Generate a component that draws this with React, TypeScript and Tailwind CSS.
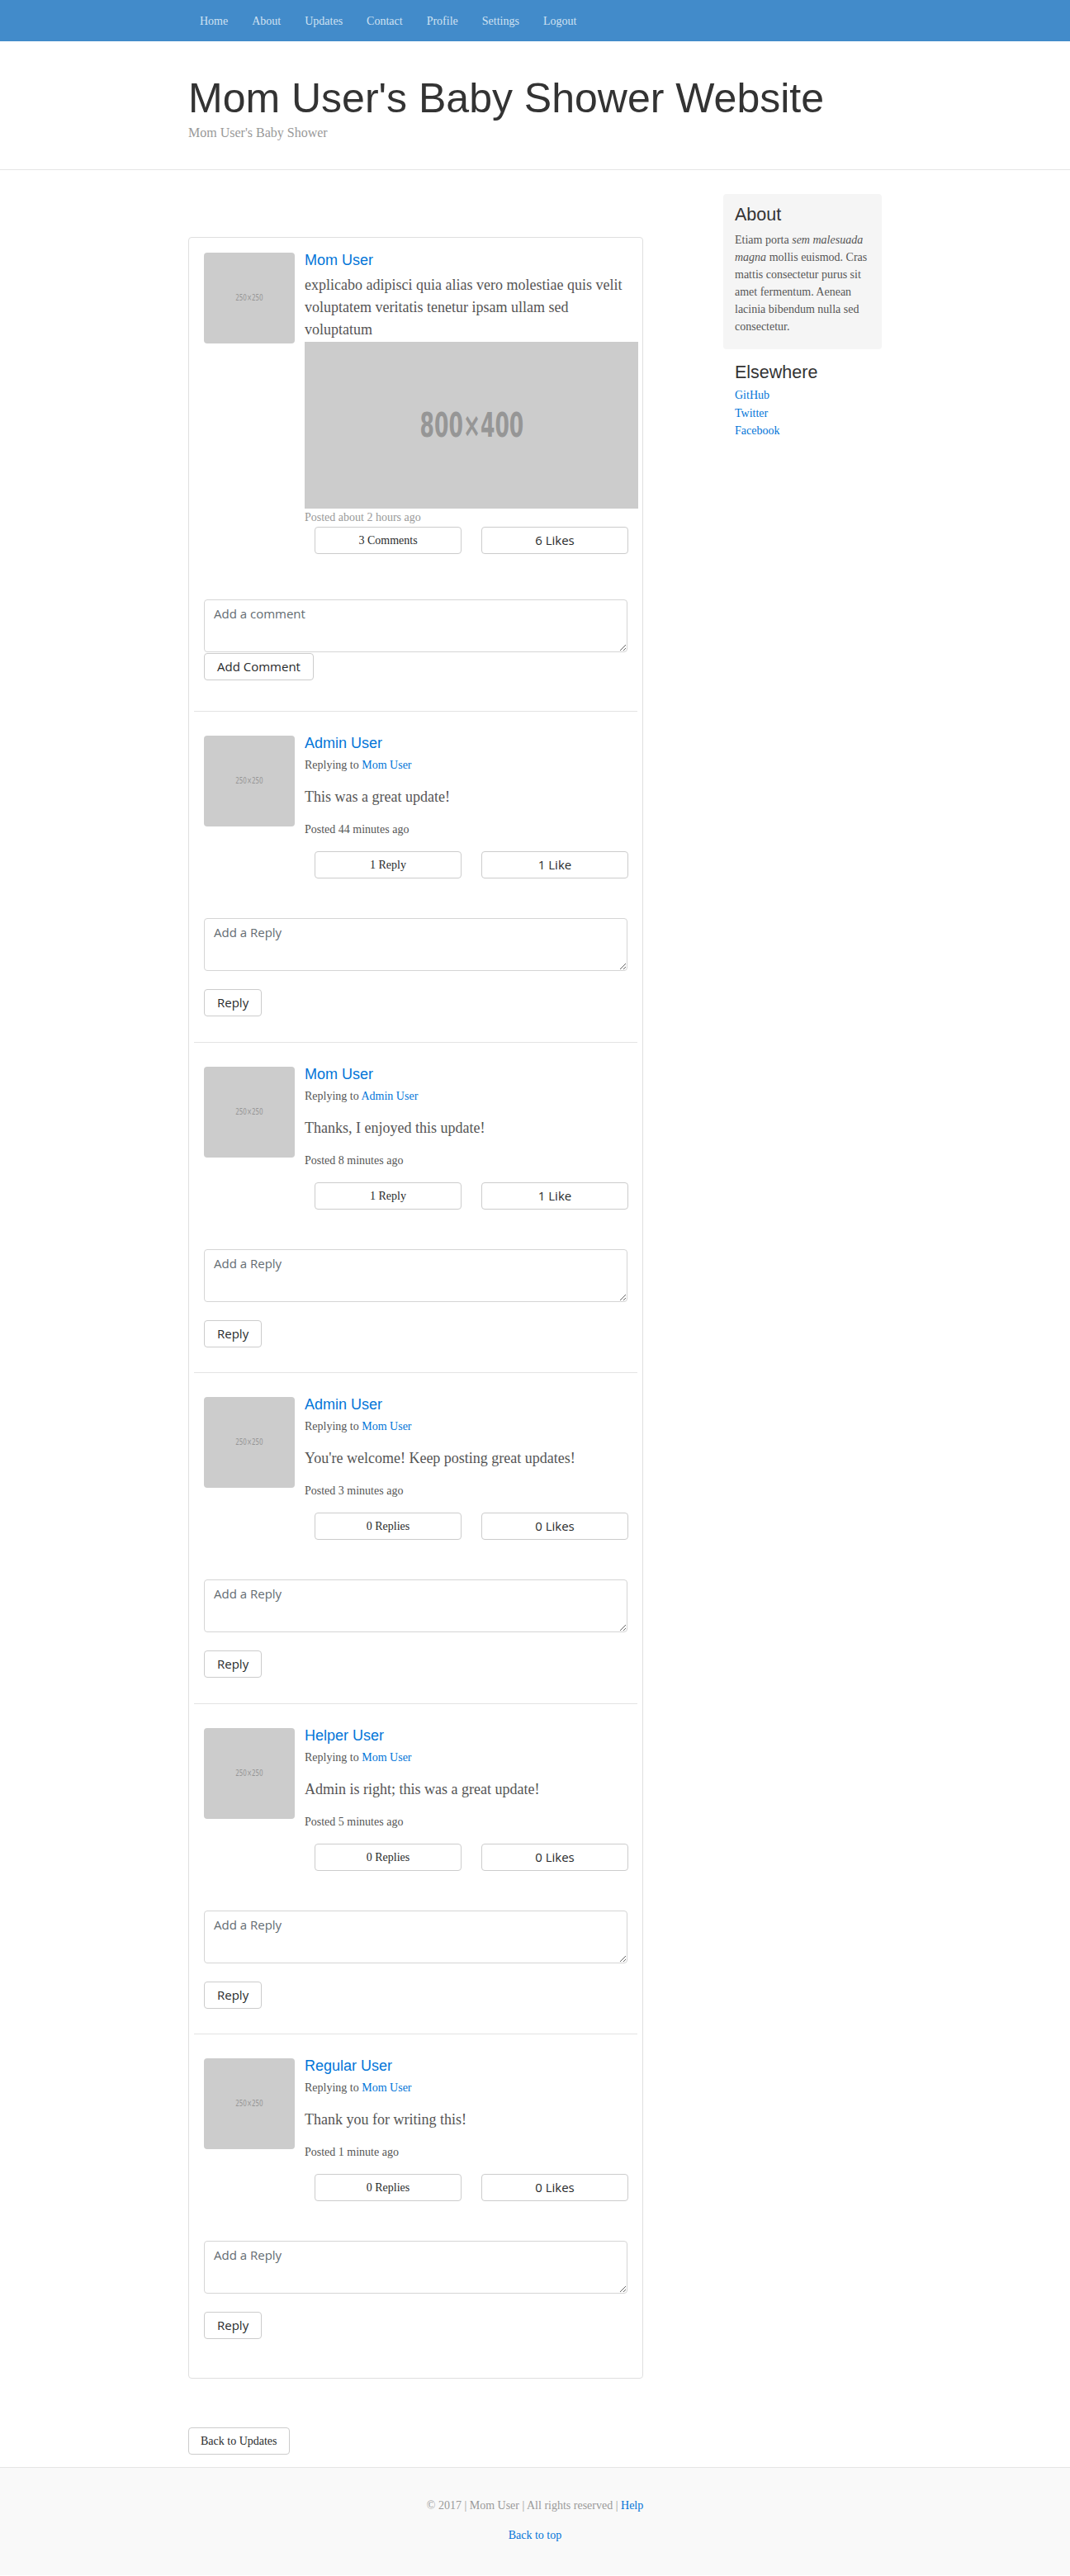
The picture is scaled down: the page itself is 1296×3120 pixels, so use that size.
import React from "react";

const serif = "font-['Liberation_Serif','Times_New_Roman',serif]";
const sans = "font-['Liberation_Sans',Arial,sans-serif]";
const formFont = "font-['Open_Sans','Noto_Sans',sans-serif]";

const navLinks = ["Home", "About", "Updates", "Contact", "Profile", "Settings", "Logout"];

type Reply = {
  author: string;
  replyingTo: string;
  body: string;
  posted: string;
  replies: string;
  likes: string;
};

const replies: Reply[] = [
  {
    author: "Admin User",
    replyingTo: "Mom User",
    body: "This was a great update!",
    posted: "Posted 44 minutes ago",
    replies: "1 Reply",
    likes: "1 Like",
  },
  {
    author: "Mom User",
    replyingTo: "Admin User",
    body: "Thanks, I enjoyed this update!",
    posted: "Posted 8 minutes ago",
    replies: "1 Reply",
    likes: "1 Like",
  },
  {
    author: "Admin User",
    replyingTo: "Mom User",
    body: "You're welcome! Keep posting great updates!",
    posted: "Posted 3 minutes ago",
    replies: "0 Replies",
    likes: "0 Likes",
  },
  {
    author: "Helper User",
    replyingTo: "Mom User",
    body: "Admin is right; this was a great update!",
    posted: "Posted 5 minutes ago",
    replies: "0 Replies",
    likes: "0 Likes",
  },
  {
    author: "Regular User",
    replyingTo: "Mom User",
    body: "Thank you for writing this!",
    posted: "Posted 1 minute ago",
    replies: "0 Replies",
    likes: "0 Likes",
  },
];

function Avatar() {
  return (
    <div className="mt-[2px] flex h-[110px] w-[110px] shrink-0 items-center justify-center rounded-[4px] bg-[#cccccc]">
      <span className="inline-block scale-x-[0.8] font-['DejaVu_Sans_Condensed','DejaVu_Sans',sans-serif] text-[10px] leading-none text-[#969696]">
        250×250
      </span>
    </div>
  );
}

function ActionButtons({ count, likes }: { count: string; likes: string }) {
  return (
    <div className="flex gap-[24px] pl-[12px]">
      <a
        href="#"
        className={`flex h-[33px] w-[178px] items-center justify-center rounded-[4px] border border-[#cccccc] bg-white text-[14px] text-[#292b2c] ${serif}`}
      >
        {count}
      </a>
      <button
        className={`flex h-[33px] w-[178px] items-center justify-center rounded-[4px] border border-[#cccccc] bg-white text-[15px] text-[#292b2c] ${formFont}`}
      >
        {likes}
      </button>
    </div>
  );
}

function CommentBox({ placeholder }: { placeholder: string }) {
  return (
    <textarea
      placeholder={placeholder}
      className={`block h-[64px] w-full rounded-[4px] border border-[#d5d5d5] bg-white px-[11px] py-[5px] text-[15px] leading-[22px] text-[#464a4c] placeholder:text-[#636c72] ${formFont}`}
    />
  );
}

function ReplySection({ reply, last }: { reply: Reply; last: boolean }) {
  return (
    <>
      <div className="h-px bg-[#e3e3e3]" />
      <div className="px-[12px] pt-[27px] pb-[30.5px]">
        <div className="flex items-start">
          <Avatar />
          <div className="ml-[12px] flex-1">
            <a href="#" className={`block text-[18px] leading-[22px] text-[#0275d8] ${sans}`}>
              {reply.author}
            </a>
            <p className="mt-[5px] text-[14px] leading-[21px] text-[#555555]">
              Replying to{" "}
              <a href="#" className="text-[#0275d8]">
                {reply.replyingTo}
              </a>
            </p>
            <p className="mt-[15px] text-[18px] leading-[27px] text-[#555555]">{reply.body}</p>
            <p className="mt-[15px] text-[14px] leading-[21px] text-[#555555]">{reply.posted}</p>
            <div className="mt-[16px]">
              <ActionButtons count={reply.replies} likes={reply.likes} />
            </div>
          </div>
        </div>
        <div className="mt-[48px]">
          <CommentBox placeholder="Add a Reply" />
        </div>
        <button
          className={`mt-[22px] block h-[33px] rounded-[4px] border border-[#cccccc] bg-white px-[15px] text-[15px] text-[#292b2c] ${formFont}`}
        >
          Reply
        </button>
      </div>
      {last ? null : null}
    </>
  );
}

export default function App() {
  return (
    <div className={`bg-white text-[14px] text-[#555555] ${serif}`}>
      {/* Navbar */}
      <nav className="h-[50px] bg-[#428bca]">
        <div className="mx-auto flex h-full w-[840px] items-center gap-[29px] pl-[14px]">
          {navLinks.map((link) => (
            <a key={link} href="#" className="text-[14px] text-[#d0e2f2]">
              {link}
            </a>
          ))}
        </div>
      </nav>

      {/* Header */}
      <header className="border-b border-[#e5e5e5] pt-[42px] pb-[32px]">
        <div className="mx-auto w-[840px]">
          <h1 className={`text-[50px] leading-[55px] text-[#333333] ${sans}`}>
            Mom User's Baby Shower Website
          </h1>
          <p className="mt-[2px] text-[16px] leading-[24px] text-[#999999]">Mom User's Baby Shower</p>
        </div>
      </header>

      {/* Main */}
      <div className="mx-auto flex w-[840px] items-start">
        <div className="w-[551px]">
          <div className="mt-[81px] rounded-[4px] border border-[#dfdfdf] px-[6px] pb-[16px]">
            {/* Update */}
            <div className="px-[12px] pt-[16px] pb-[37px]">
              <div className="flex items-start">
                <Avatar />
                <div className="ml-[12px] flex-1">
                  <a href="#" className={`block text-[18px] leading-[22px] text-[#0275d8] ${sans}`}>
                    Mom User
                  </a>
                  <p className="mt-[6px] text-[18px] leading-[27px] text-[#555555]">
                    explicabo adipisci quia alias vero molestiae quis velit voluptatem veritatis tenetur ipsam ullam
                    sed voluptatum
                  </p>
                  <div className="mt-[1px] flex h-[202px] w-[404px] items-center justify-center bg-[#cccccc]">
                    <span className="inline-block scale-x-[0.68] font-['DejaVu_Sans_Condensed','DejaVu_Sans',sans-serif] text-[41px] font-bold leading-none text-[#969696]">
                      800×400
                    </span>
                  </div>
                  <p className="text-[14px] leading-[21px] text-[#999999]">Posted about 2 hours ago</p>
                  <div className="mt-[1px]">
                    <ActionButtons count="3 Comments" likes="6 Likes" />
                  </div>
                </div>
              </div>
              <div className="mt-[55px]">
                <CommentBox placeholder="Add a comment" />
              </div>
              <button
                className={`mt-[1px] block h-[33px] rounded-[4px] border border-[#cccccc] bg-white px-[15px] text-[15px] text-[#292b2c] ${formFont}`}
              >
                Add Comment
              </button>
            </div>

            {replies.map((reply, i) => (
              <ReplySection key={i} reply={reply} last={i === replies.length - 1} />
            ))}
          </div>

          <a
            href="#"
            className="mt-[59px] inline-flex h-[33px] items-center rounded-[4px] border border-[#cccccc] bg-white px-[14px] text-[14px] text-[#292b2c]"
          >
            Back to Updates
          </a>
        </div>

        {/* Sidebar */}
        <aside className="ml-auto mt-[29px] w-[192px]">
          <div className="rounded-[4px] bg-[#f5f5f5] px-[14px] pt-[13px] pb-[17px]">
            <h4 className={`text-[21.5px] leading-[24px] text-[#333333] ${sans}`}>About</h4>
            <p className="mt-[8px] text-[14px] leading-[21px] text-[#555555]">
              Etiam porta <em>sem malesuada magna</em> mollis euismod. Cras mattis consectetur purus sit amet
              fermentum. Aenean lacinia bibendum nulla sed consectetur.
            </p>
          </div>
          <div className="px-[14px] pt-[16px]">
            <h4 className={`text-[21.5px] leading-[24px] text-[#333333] ${sans}`}>Elsewhere</h4>
            <ol className="mt-[5px] text-[14px] leading-[21.5px]">
              <li>
                <a href="#" className="text-[#0275d8]">
                  GitHub
                </a>
              </li>
              <li>
                <a href="#" className="text-[#0275d8]">
                  Twitter
                </a>
              </li>
              <li>
                <a href="#" className="text-[#0275d8]">
                  Facebook
                </a>
              </li>
            </ol>
          </div>
        </aside>
      </div>

      {/* Footer */}
      <footer className="mt-[15px] border-t border-[#e5e5e5] bg-[#f9f9f9] pt-[35px] pb-[38px] text-center">
        <p className="text-[14px] leading-[21px] text-[#999999]">
          © 2017 | Mom User | All rights reserved |{" "}
          <a href="#" className="text-[#0275d8]">
            Help
          </a>
        </p>
        <p className="mt-[15px] text-[14px] leading-[21px]">
          <a href="#" className="text-[#0275d8]">
            Back to top
          </a>
        </p>
      </footer>
    </div>
  );
}
